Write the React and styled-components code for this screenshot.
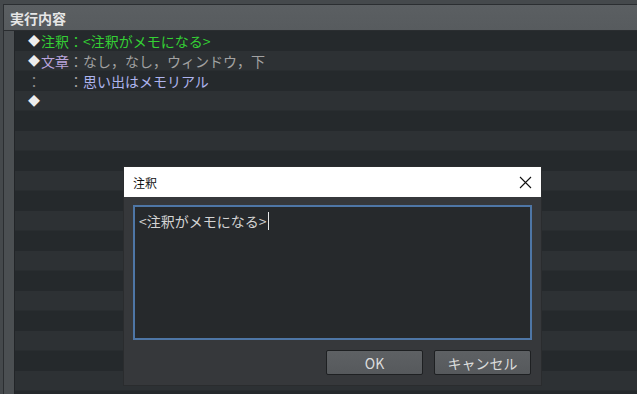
import React from "react";
import styled, { createGlobalStyle } from "styled-components";

const GlobalStyle = createGlobalStyle`
  html, body {
    margin: 0;
    padding: 0;
    background: #45494c;
    overflow: hidden;
  }
  body {
    font-family: "Noto Sans CJK JP", "Noto Sans", sans-serif;
  }
`;

const Page = styled.div`
  position: relative;
  width: 637px;
  height: 394px;
  padding: 4px 0 0 3px;
  box-sizing: border-box;
  background: #45494c;
`;

const Panel = styled.div`
  height: 100%;
  display: flex;
  flex-direction: column;
  border-top: 1px solid #2b2e31;
  border-left: 1px solid #2b2e31;
  background: #4b4f52;
`;

const PanelHeader = styled.div`
  height: 25px;
  flex-shrink: 0;
  display: flex;
  align-items: center;
  padding-left: 6px;
  background: linear-gradient(#5b5f62, #575b5e);
  border-bottom: 1px solid #2a2d30;
  color: #e6e6e6;
  font-size: 14px;
  font-weight: bold;
`;

const PanelBody = styled.div`
  flex: 1;
  display: flex;
  padding-left: 10px;
`;

const List = styled.div`
  flex: 1;
  border-left: 1px solid #222528;
  background: repeating-linear-gradient(
    #25292c 0px,
    #25292c 20px,
    #2d3134 20px,
    #2d3134 39px,
    #292d30 39px,
    #292d30 40px
  );
`;

const Row = styled.div`
  height: 20px;
  display: flex;
  align-items: center;
  padding-left: 12px;
  font-size: 14px;
  line-height: 20px;
  white-space: pre;
  color: #a2a2a2;
`;

const Marker = styled.span`
  width: 14px;
  text-align: center;
  color: ${(p) => (p.$grey ? "#8d8d8d" : "#eeeeee")};
  font-size: ${(p) => (p.$grey ? "14px" : "12px")};
`;

const Label = styled.span`
  display: inline-block;
  width: 28px;
  color: ${(p) => p.$color || "inherit"};
`;

const Text = styled.span`
  color: ${(p) => p.$color || "inherit"};
`;

const Dialog = styled.div`
  position: absolute;
  left: 124px;
  top: 167px;
  width: 417px;
  height: 218px;
  display: flex;
  flex-direction: column;
  background: #36383b;
  box-shadow: 0 0 0 1px #2a2c2e;
`;

const TitleBar = styled.div`
  height: 30px;
  flex-shrink: 0;
  display: flex;
  align-items: center;
  justify-content: space-between;
  padding: 0 9px;
  background: #ffffff;
  color: #111;
  font-size: 12px;
`;

const Body = styled.div`
  flex: 1;
  display: flex;
  flex-direction: column;
  padding: 8px 9px 10px 9px;
  gap: 10px;
`;

const TextBox = styled.div`
  box-sizing: border-box;
  height: 135px;
  flex-shrink: 0;
  border: 2px solid #4e76a6;
  background: #26292c;
  padding: 4px 4px;
  color: #d4d4d4;
  font-size: 14px;
  line-height: 20px;
  display: flex;
  align-items: flex-start;
`;

const Caret = styled.span`
  display: inline-block;
  width: 1px;
  height: 18px;
  margin-top: 1px;
  background: #e8e8e8;
  margin-left: 1px;
`;

const Buttons = styled.div`
  display: flex;
  justify-content: flex-end;
  gap: 11px;
  padding-right: 1px;
`;

const Button = styled.button`
  box-sizing: border-box;
  width: 97px;
  height: 25px;
  border: 1px solid #1e2022;
  border-radius: 2px;
  background: linear-gradient(#5e6164, #56595c);
  color: #dcdcdc;
  font-family: "Noto Sans CJK JP", "Noto Sans", sans-serif;
  font-size: 14px;
  padding: 0;
`;

function CloseIcon() {
  return (
    <svg width="13" height="13" viewBox="0 0 13 13">
      <path d="M1 1 L12 12 M12 1 L1 12" stroke="#111" strokeWidth="1.1" />
    </svg>
  );
}

export default function App() {
  return (
    <>
      <GlobalStyle />
      <Page>
        <Panel>
          <PanelHeader>実行内容</PanelHeader>
          <PanelBody>
            <List>
              <Row>
                <Marker>◆</Marker>
                <Text $color="#34d034">注釈：&lt;注釈がメモになる&gt;</Text>
              </Row>
              <Row>
                <Marker>◆</Marker>
                <Label $color="#b9a4dc">文章</Label>
                <Text>：なし，なし，ウィンドウ，下</Text>
              </Row>
              <Row>
                <Marker $grey>：</Marker>
                <Label />
                <Text>：</Text>
                <Text $color="#aeb4ee">思い出はメモリアル</Text>
              </Row>
              <Row>
                <Marker>◆</Marker>
              </Row>
            </List>
          </PanelBody>
        </Panel>
        <Dialog>
          <TitleBar>
            <span>注釈</span>
            <CloseIcon />
          </TitleBar>
          <Body>
            <TextBox>
              <span>&lt;注釈がメモになる&gt;</span>
              <Caret />
            </TextBox>
            <Buttons>
              <Button>OK</Button>
              <Button>キャンセル</Button>
            </Buttons>
          </Body>
        </Dialog>
      </Page>
    </>
  );
}
